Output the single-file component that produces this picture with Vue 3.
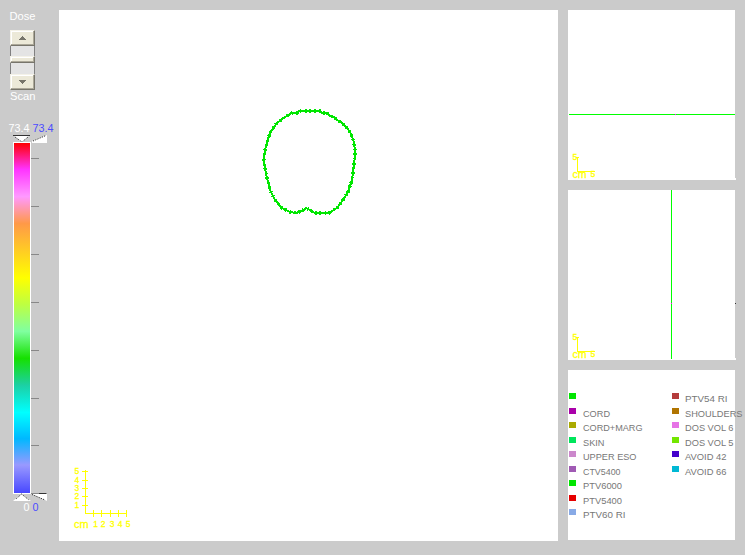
<script setup>
const ticks = [158, 206, 254, 302, 350, 398, 445]

const vertical = [
  { n: 5, y: 471 }, { n: 4, y: 480 }, { n: 3, y: 488 }, { n: 2, y: 496 }, { n: 1, y: 505 },
]
const horizontal = [
  { n: 1, x: 93, t: 95.5 }, { n: 2, x: 101, t: 103 }, { n: 3, x: 110, t: 112 }, { n: 4, x: 118, t: 120 }, { n: 5, x: 126, t: 128 },
]

const outline = [
  '264,160 264,156 265,150 267,142 270,133 274,127 277,123 282,119 287,116 292,113 297,113 299,111 320,111 322,113 327,113',
  '330,116 334,117 337,120 341,122 345,126 348,129 351,134 353,139 354,143 355,151 355,156 354,165 352,180 348,192 343,200',
  '337,208 332,211 329,213 315,213 310,210 306,208 302,211 296,213 290,212 282,208 275,200 270,190 267,178 265,168 264,160',
].join(' ')

const columns = [
  [
    { name: '', color: '#00e600', w: 0 },
    { name: 'CORD', color: '#aa00aa', w: 27 },
    { name: 'CORD+MARG', color: '#aaaa00', w: 59.5 },
    { name: 'SKIN', color: '#00e65c', w: 21.5 },
    { name: 'UPPER ESO', color: '#cc88cc', w: 53.5 },
    { name: 'CTV5400', color: '#a05ab4', w: 37.5 },
    { name: 'PTV6000', color: '#00e600', w: 39 },
    { name: 'PTV5400', color: '#e60000', w: 39 },
    { name: 'PTV60 RI', color: '#88aae6', w: 42.5 },
  ],
  [
    { name: 'PTV54 RI', color: '#b43c3c', w: 42.5 },
    { name: 'SHOULDERS', color: '#b07400', w: 57.5 },
    { name: 'DOS VOL 6', color: '#e673e6', w: 48.5 },
    { name: 'DOS VOL 5', color: '#73e600', w: 48.5 },
    { name: 'AVOID 42', color: '#4400cc', w: 41.5 },
    { name: 'AVOID 66', color: '#00b8d4', w: 41.5 },
  ],
]
</script>

<template>
  <div class="viewer">
    <aside class="side">
      <svg class="label" width="59" height="30">
        <text x="9.5" y="20" textLength="26" lengthAdjust="spacingAndGlyphs">Dose</text>
      </svg>
      <div class="slider">
        <div class="btn"><svg width="7" height="4"><path d="M3 0h1v1h1v1h1v1h1v1H0V3h1V2h1V1h1z" /></svg></div>
        <div class="track"></div>
        <div class="thumb"></div>
        <div class="track low"></div>
        <div class="btn"><svg width="7" height="4"><path d="M0 0h7v1H6v1H5v1H4v1H3V3H2V2H1V1H0z" /></svg></div>
      </div>
      <svg class="label" width="59" height="52" viewBox="0 90 59 52">
        <text x="10" y="100" textLength="25.5" lengthAdjust="spacingAndGlyphs">Scan</text>
        <text x="8.5" y="132" textLength="21" lengthAdjust="spacingAndGlyphs">73.4</text>
        <text class="blue" x="32.5" y="132" textLength="21" lengthAdjust="spacingAndGlyphs">73.4</text>
        <path d="M13 135H30L22 142.500Z" fill="#fff" />
        <path d="M13 135h17v1H13z" fill="#333" />
        <path d="M15 137l7 5M28 137l-6 5" stroke="#333" stroke-dasharray="1 1" />
        <path d="M32 143V141L47 135V143Z" fill="#fff" />
        <path d="M33 141L46 135.500" stroke="#333" stroke-dasharray="1.2 1.2" />
      </svg>
      <div class="scale">
        <div class="bar"></div>
        <svg width="9" height="352" viewBox="31 142 9 352">
          <rect v-for="t in ticks" :key="t" x="31" :y="t" width="8" height="1" fill="#888" />
        </svg>
      </div>
      <svg class="label" width="59" height="61" viewBox="0 494 59 61">
        <path d="M21.500 494L31 501H13Z" fill="#fff" />
        <path d="M21.500 494L16 499M21.500 494L29 500" stroke="#333" stroke-dasharray="1 1" />
        <path d="M31 493.500H47V501Z" fill="#fff" />
        <path d="M31 493h16v1H31z" fill="#888" />
        <path d="M39 493h7v1H39z" fill="#333" />
        <path d="M32 494.500L45 500" stroke="#333" stroke-dasharray="1.2 1.2" />
        <text x="23.500" y="511" textLength="6" lengthAdjust="spacingAndGlyphs">0</text>
        <text class="blue" x="32.500" y="511" textLength="6" lengthAdjust="spacingAndGlyphs">0</text>
      </svg>
    </aside>

    <main class="axial">
      <svg width="499" height="531" viewBox="59 10 499 531">
        <polyline class="contour" :points="outline" />
        <polyline class="contour rough" :points="outline" />
        <g class="ruler">
          <path d="M85 470h1v44h-1zM85 513h42v1H85z" />
          <rect v-for="v in vertical" :key="'v' + v.n" x="82" :y="v.y" width="6" height="1" />
          <rect v-for="h in horizontal" :key="'h' + h.n" :x="h.x" y="510" width="1" height="7" />
          <text v-for="v in vertical" :key="'vt' + v.n" x="74.500" :y="v.y + 3">{{ v.n }}</text>
          <text x="74" y="528" class="cm" textLength="14.500" lengthAdjust="spacingAndGlyphs">cm</text>
          <text v-for="h in horizontal" :key="'ht' + h.n" :x="h.t" y="527" text-anchor="middle">{{ h.n }}</text>
        </g>
      </svg>
    </main>

    <section class="right">
      <div class="view">
        <svg width="168" height="170" viewBox="568 10 168 170">
          <rect x="569" y="114" width="166" height="1" fill="#00ff00" />
          <rect x="675" y="114" width="1" height="1" fill="#ff00ff" />
          <rect x="735" y="178" width="1" height="2" fill="#fff" />
          <g class="ruler">
            <path d="M577 157h1v15h-1zM577 171h18v1h-18zM576 157h3v1h-3z" />
            <text x="572.500" y="160">5</text>
            <text x="572.500" y="178" class="cm" textLength="14" lengthAdjust="spacingAndGlyphs">cm</text>
            <text x="590.500" y="177">5</text>
          </g>
        </svg>
      </div>
      <div class="view">
        <svg width="168" height="170" viewBox="568 190 168 170">
          <rect x="671" y="190" width="1" height="169" fill="#00ff00" />
          <rect x="671" y="303" width="1" height="1" fill="#ff00ff" />
          <rect x="735" y="303" width="1" height="1" fill="#333" />
          <rect x="735" y="358" width="1" height="2" fill="#fff" />
          <g class="ruler">
            <path d="M577 337h1v15h-1zM577 351h18v1h-18zM576 337h3v1h-3z" />
            <text x="572.500" y="340">5</text>
            <text x="572.500" y="358" class="cm" textLength="14" lengthAdjust="spacingAndGlyphs">cm</text>
            <text x="590.500" y="357">5</text>
          </g>
        </svg>
      </div>
      <div class="view legend">
        <ul v-for="(col, i) in columns" :key="i">
          <li v-for="item in col" :key="item.name">
            <i :style="{ background: item.color }"></i>
            <svg v-if="item.name" width="61" height="14">
              <text x="0" y="9.200" :textLength="item.w" lengthAdjust="spacingAndGlyphs">{{ item.name }}</text>
            </svg>
          </li>
        </ul>
      </div>
    </section>
  </div>
</template>

<style>
body { margin: 0; background: #cbcbcb; overflow: hidden; }
</style>

<style scoped>
.viewer {
  display: grid;
  grid-template-columns: 59px 499px 187px;
  width: 745px;
  height: 555px;
  background: #cbcbcb;
  font-family: "Liberation Sans", Arial, sans-serif;
}
svg { display: block; overflow: visible; }
.side { display: flex; flex-direction: column; }
.label { flex: none; fill: #fff; font-size: 11px; }
.label .blue { fill: #4b4bff; }
.slider {
  width: 25px;
  height: 60px;
  margin-left: 10px;
  display: flex;
  flex-direction: column;
}
.btn, .thumb {
  box-sizing: border-box;
  flex: none;
  background: #ece9d8;
  border: 1px solid #f4f2e8;
  border-right: 1px solid #77756b;
  border-bottom: 1px solid #77756b;
  box-shadow: inset -1px -1px #aca899, inset 1px 1px #fff;
}
.btn {
  height: 16px;
  display: flex;
  align-items: center;
  justify-content: center;
}
.btn svg { fill: #77756b; }
.track {
  height: 10px;
  flex: none;
  background: #e4e4e4;
  border-left: 1px solid #808080;
  border-right: 1px solid #808080;
}
.track.low { height: 11px; }
.thumb { height: 7px; }
.scale { display: flex; height: 352px; margin-left: 13px; }
.bar {
  box-sizing: border-box;
  width: 18px;
  border: 1px solid #fff;
  background: linear-gradient(#ff0000 0%, #ff33ff 7.5%, #ff99ff 15.300%, #ff9948 23%, #ffff00 38.500%, #bfff40 46%, #80ffa0 53.800%, #16e000 61.500%, #1cd0a4 69.200%, #00ffff 77%, #00b8ff 84.500%, #9999ff 92%, #4848ff 100%) padding-box;
}
.axial { margin-top: 10px; height: 531px; background: #fff; }
.contour {
  fill: none;
  stroke: #00e600;
  stroke-width: 2;
  shape-rendering: crispEdges;
}
.contour.rough { stroke-width: 3.4; stroke-dasharray: 1.500 3.500 2 2.500; }
.ruler { fill: #ffff00; font-size: 8.5px; }
.ruler text { stroke: #ffff00; stroke-width: 0.3; }
.ruler path, .ruler rect { shape-rendering: crispEdges; }
.ruler .cm { font-size: 11px; }
.right {
  display: flex;
  flex-direction: column;
  gap: 10px;
  padding: 10px 0 0 10px;
}
.view { width: 167px; height: 170px; background: #fff; }
.legend { display: flex; box-sizing: border-box; padding: 23px 0 0 1px; }
.legend ul { list-style: none; margin: 0; padding: 0; flex: 0 0 103px; }
.legend ul + ul svg { margin-left: -1px; }
.legend li { display: flex; gap: 6.500px; height: 14.500px; }
.legend i { width: 7px; height: 6px; flex: none; }
.legend svg { fill: #777; font-size: 9.6px; flex: none; }
</style>
